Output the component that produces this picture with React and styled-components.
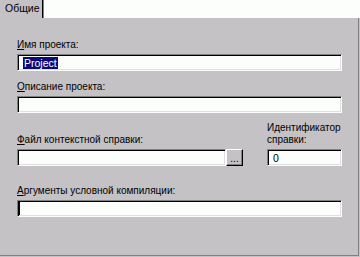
import React from "react";
import styled, { createGlobalStyle } from "styled-components";

const colors = {
  face: "#c5c2c5",
  white: "#fcfefc",
  shadow: "#808080",
  dark: "#000000",
  light: "#dfdfdf",
  select: "#0a0a78",
};

const GlobalStyle = createGlobalStyle`
  html, body {
    margin: 0;
    padding: 0;
    background: ${colors.face};
  }
  body {
    width: 360px;
    height: 257px;
    overflow: hidden;
    font-family: "Liberation Sans", Arial, sans-serif;
    font-size: 10px;
    color: #000;
  }
`;

const App = () => {
  return (
    <>
      <GlobalStyle />
      <Window>
        <TabStrip>
          <Tab>Общие</Tab>
          <TabFiller />
        </TabStrip>

        <Panel>
          <Group top={20}>
            <Label>
              <Key>И</Key>мя проекта:
            </Label>
            <Field>
              <Selected>Project</Selected>
            </Field>
          </Group>

          <Group top={9}>
            <Label>
              <Key>О</Key>писание проекта:
            </Label>
            <Field />
          </Group>

          <SplitRow>
            <Column>
              <Label>
                <Key>Ф</Key>айл контекстной справки:
              </Label>
              <FieldRow>
                <Field />
                <BrowseButton>...</BrowseButton>
              </FieldRow>
            </Column>
            <Column>
              <SmallLabel>
                И<Key>д</Key>ентификатор
                <br />
                справки:
              </SmallLabel>
              <Field>0</Field>
            </Column>
          </SplitRow>

          <Group top={18}>
            <Label>
              <Key>А</Key>ргументы условной компиляции:
            </Label>
            <Field>
              <Caret />
            </Field>
          </Group>
        </Panel>
      </Window>
    </>
  );
};
export default App;

const Window = styled.div`
  display: flex;
  flex-direction: column;
  width: 360px;
  height: 257px;
`;

const TabStrip = styled.div`
  display: flex;
  height: 18px;
`;

const Tab = styled.div`
  width: 43px;
  padding-left: 5px;
  box-sizing: border-box;
  background: ${colors.face};
  border-right: 1px solid ${colors.dark};
  box-shadow: 1px 0 0 ${colors.shadow};
  line-height: 16px;
  font-size: 10.5px;
  position: relative;
  z-index: 1;
`;

const TabFiller = styled.div`
  flex: 1;
  background: ${colors.white};
`;

const Panel = styled.div`
  display: flex;
  flex-direction: column;
  width: 359px;
  height: 238px;
  box-sizing: border-box;
  padding: 0 16px 0 17px;
  background: ${colors.face};
  border-right: 1px solid ${colors.shadow};
  border-bottom: 1px solid ${colors.shadow};
`;

const Group = styled.div`
  display: flex;
  flex-direction: column;
  margin-top: ${(props) => props.top}px;
`;

const Label = styled.div`
  line-height: 13px;
  margin-bottom: 3px;
  white-space: nowrap;
`;

const SmallLabel = styled.div`
  line-height: 12px;
  margin-bottom: 3px;
  white-space: nowrap;
`;

const Key = styled.span`
  text-decoration: underline;
`;

const Field = styled.div`
  height: 17px;
  min-width: 0;
  box-sizing: border-box;
  display: flex;
  align-items: center;
  padding-left: 5px;
  background: ${colors.white};
  border-top: 1px solid ${colors.shadow};
  border-left: 1px solid ${colors.shadow};
  border-right: 1px solid ${colors.white};
  border-bottom: 1px solid ${colors.white};
  box-shadow: inset 1px 1px 0 ${colors.dark},
    inset -1px -1px 0 ${colors.light};
  line-height: 12px;
  font-size: 10.5px;
`;

const Selected = styled.span`
  background: ${colors.select};
  color: #fff;
  padding: 0 1px;
`;

const Caret = styled.span`
  display: block;
  width: 1px;
  height: 13px;
  margin-left: -4px;
  background: ${colors.dark};
`;

const SplitRow = styled.div`
  display: grid;
  grid-template-columns: 1fr 75px;
  column-gap: 24px;
  align-items: end;
  margin-top: 9px;
`;

const Column = styled.div`
  display: flex;
  flex-direction: column;
`;

const FieldRow = styled.div`
  display: grid;
  grid-template-columns: 1fr 17px;
`;

const BrowseButton = styled.div`
  width: 17px;
  height: 17px;
  box-sizing: border-box;
  display: flex;
  align-items: flex-end;
  justify-content: center;
  padding-bottom: 2px;
  background: ${colors.face};
  border-top: 1px solid ${colors.white};
  border-left: 1px solid ${colors.white};
  border-right: 1px solid ${colors.dark};
  border-bottom: 1px solid ${colors.dark};
  box-shadow: inset -1px -1px 0 ${colors.shadow};
  line-height: 8px;
  font-size: 10px;
`;
